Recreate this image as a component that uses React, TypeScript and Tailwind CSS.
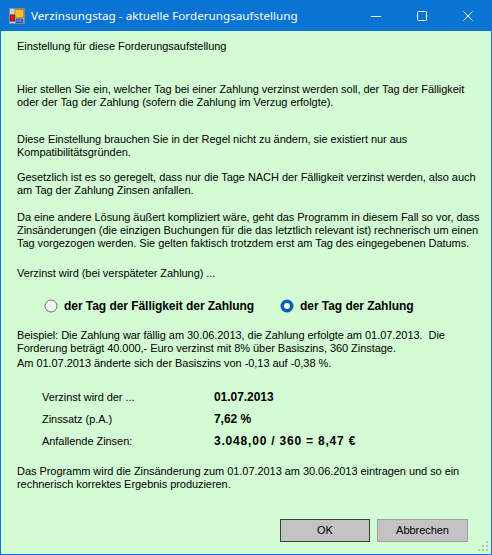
import React from "react";

const ui = { fontFamily: '"Liberation Sans", Arial, sans-serif' };
const title = { fontFamily: '"Noto Sans", "Open Sans", sans-serif' };

function AppIcon() {
  return (
    <svg width="16" height="16" viewBox="0 0 16 16">
      <rect x="0.5" y="0.5" width="15" height="15" fill="#c8d4e4" stroke="#7a8aa4" />
      <rect x="6" y="1.5" width="8.5" height="8" fill="#f6c232" stroke="#c88a10" />
      <rect x="1.5" y="7" width="4" height="6" fill="#d82020" stroke="#901010" />
      <rect x="7" y="11" width="7" height="3.5" fill="#5a7ee0" stroke="#2a4aa0" />
    </svg>
  );
}

function Radio({ checked, label }: { checked: boolean; label: string }) {
  return (
    <div className="flex items-center gap-[6px]">
      {checked ? (
        <svg width="14" height="14" viewBox="0 0 14 14">
          <circle cx="7" cy="7" r="6.5" fill="#005fb8" />
          <circle cx="7" cy="7" r="3" fill="#ffffff" />
        </svg>
      ) : (
        <svg width="14" height="14" viewBox="0 0 14 14">
          <circle cx="7" cy="7" r="6" fill="#f3f3f3" stroke="#6e6e6e" strokeWidth="1" />
        </svg>
      )}
      <span className="text-[12px] font-bold text-black">{label}</span>
    </div>
  );
}

function Grip() {
  const dots = [
    [8, 0],
    [4, 4],
    [8, 4],
    [0, 8],
    [4, 8],
    [8, 8],
  ];
  return (
    <svg width="11" height="11" viewBox="0 0 11 11" className="absolute right-[2px] bottom-[2px]">
      {dots.map(([x, y], i) => (
        <rect key={i} x={x} y={y} width="2" height="2" fill="#b8c4b8" />
      ))}
    </svg>
  );
}

export default function App() {
  return (
    <div
      className="relative w-[492px] h-[555px] border border-[#0a74d4] bg-[#d4fcd4] flex flex-col overflow-hidden"
      style={ui}
    >
      {/* caption bar */}
      <div className="h-[30px] bg-[#0a74d4] flex items-center text-white shrink-0">
        <div className="w-[30px] flex justify-center pl-[1px]">
          <AppIcon />
        </div>
        <span className="text-[11.6px] tracking-[0.05px]" style={title}>
          Verzinsungstag - aktuelle Forderungsaufstellung
        </span>
        <div className="ml-auto flex h-full">
          <div className="w-[46px] flex items-center justify-center">
            <svg width="10" height="10" viewBox="0 0 10 10">
              <path d="M0 5.5h10" stroke="#fff" strokeWidth="1" />
            </svg>
          </div>
          <div className="w-[46px] flex items-center justify-center">
            <svg width="10" height="10" viewBox="0 0 10 10">
              <rect x="0.5" y="0.5" width="9" height="9" rx="1" fill="none" stroke="#fff" strokeWidth="1" />
            </svg>
          </div>
          <div className="w-[46px] flex items-center justify-center">
            <svg width="10" height="10" viewBox="0 0 10 10">
              <path d="M0.5 0.5l9 9M9.5 0.5l-9 9" stroke="#fff" strokeWidth="1" />
            </svg>
          </div>
        </div>
      </div>

      {/* body */}
      <div className="flex-1 flex flex-col px-[16px] text-[11px] leading-[13px] text-black whitespace-nowrap tracking-[-0.05px]">
        <p className="mt-[9px]">Einstellung für diese Forderungsaufstellung</p>
        <p className="mt-[30px]">
          Hier stellen Sie ein, welcher Tag bei einer Zahlung verzinst werden soll, der Tag der Fälligkeit
          <br />
          oder der Tag der Zahlung (sofern die Zahlung im Verzug erfolgte).
        </p>
        <p className="mt-[24px]">
          Diese Einstellung brauchen Sie in der Regel nicht zu ändern, sie existiert nur aus
          <br />
          Kompatibilitätsgründen.
        </p>
        <p className="mt-[12px]">
          Gesetzlich ist es so geregelt, dass nur die Tage NACH der Fälligkeit verzinst werden, also auch
          <br />
          am Tag der Zahlung Zinsen anfallen.
        </p>
        <p className="mt-[14px]">
          Da eine andere Lösung äußert kompliziert wäre, geht das Programm in diesem Fall so vor, dass
          <br />
          Zinsänderungen (die einzigen Buchungen für die das letztlich relevant ist) rechnerisch um einen
          <br />
          Tag vorgezogen werden. Sie gelten faktisch trotzdem erst am Tag des eingegebenen Datums.
        </p>
        <p className="mt-[17px]">Verzinst wird (bei verspäteter Zahlung) ...</p>

        <div className="mt-[19px] flex pl-[27px]">
          <div className="w-[236px]">
            <Radio checked={false} label="der Tag der Fälligkeit der Zahlung" />
          </div>
          <Radio checked label="der Tag der Zahlung" />
        </div>

        <p className="mt-[16px]">
          Beispiel: Die Zahlung war fällig am 30.06.2013, die Zahlung erfolgte am 01.07.2013.&nbsp; Die
          <br />
          Forderung beträgt 40.000,- Euro verzinst mit 8% über Basiszins, 360 Zinstage.
        </p>
        <p className="mt-[2px]">Am 01.07.2013 änderte sich der Basiszins von -0,13 auf -0,38 %.</p>

        <div className="mt-[21px] pl-[25px] grid grid-cols-[172px_1fr] gap-y-[9px] items-center">
          <span>Verzinst wird der ...</span>
          <span className="text-[12px] font-bold">01.07.2013</span>
          <span>Zinssatz (p.A.)</span>
          <span className="text-[12px] font-bold">7,62 %</span>
          <span>Anfallende Zinsen:</span>
          <span className="text-[12px] font-bold tracking-[0.8px]">3.048,00 / 360 = 8,47 €</span>
        </div>

        <p className="mt-[17px]">
          Das Programm wird die Zinsänderung zum 01.07.2013 am 30.06.2013 eintragen und so ein
          <br />
          rechnerisch korrektes Ergebnis produzieren.
        </p>

        <div className="mt-auto mb-[12px] flex justify-end gap-[7px] pr-[7px]">
          <button className="w-[90px] h-[23px] bg-[#c3c3c3] border border-[#3c3c3c] text-[11px]">OK</button>
          <button className="w-[91px] h-[23px] bg-[#c3c3c3] border border-[#a0a0a0] text-[11px]">
            Abbrechen
          </button>
        </div>
      </div>
      <Grip />
    </div>
  );
}
